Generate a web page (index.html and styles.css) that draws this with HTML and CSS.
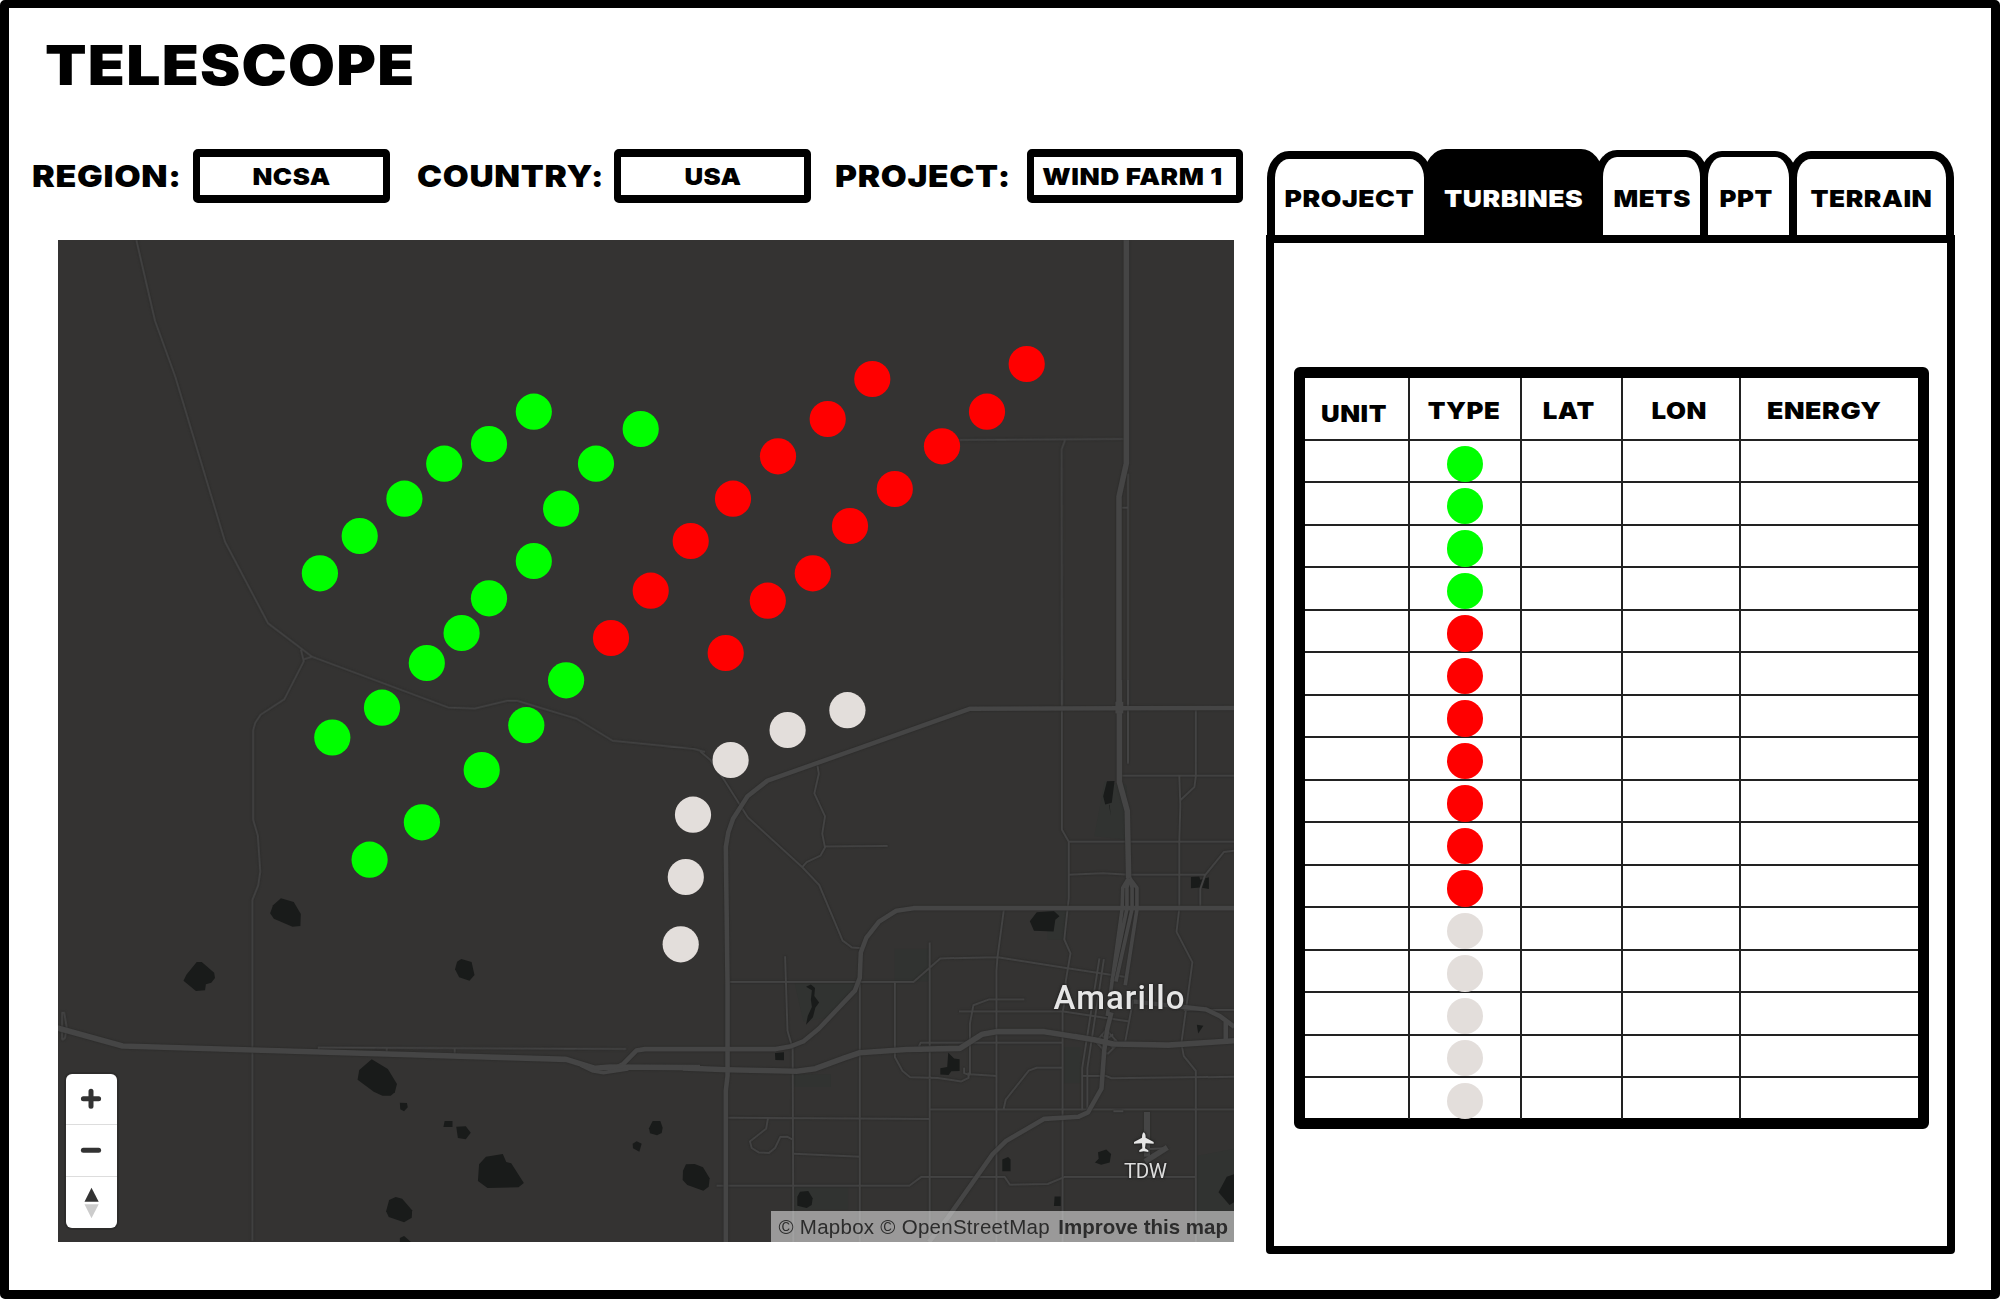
FILE: index.html
```html
<!DOCTYPE html>
<html lang="en">
<head>
<meta charset="utf-8">
<title>Telescope</title>
<link rel="stylesheet" href="styles.css">
</head>
<body>
<div class="frame">
  <header class="header"><h1 class="title">TELESCOPE</h1></header>
  <main class="main">
    <section class="left">
      <div class="filters">
        <span class="label label-region">REGION:</span><div class="field"><span class="wide">NCSA</span></div>
        <span class="label label-country">COUNTRY:</span><div class="field field-usa"><span class="wide">USA</span></div>
        <span class="label label-project">PROJECT:</span><div class="field field-farm"><span class="wide">WIND FARM 1</span></div>
      </div>
      <div class="map">
        <svg class="map-canvas" viewBox="58 240 1176 1001.5" preserveAspectRatio="none">
          <g class="parks">
            <path transform="translate(700 680) scale(.3443 .3633)" d="M1175 280L1240 290L1240 440L1145 430ZM565 740H665V830H620L565 828ZM275 835H455L370 930L300 940ZM1010 635H1065V715H1010ZM1442 1310L1552 1290V1547H1442ZM275 1395H430V1458H275ZM1058 1010H1105V1110H1058ZM270 1085H380V1120H270Z"/>
          </g>
          <g class="lakes">
            <g transform="translate(50 640) scale(.41454 .33333)">
              <path d="M557 775L588 786L605 822L604 858L585 860L540 836L531 820L538 796Z"/>
              <path d="M354 966H366L396 998L398 1014L389 1028L376 1033L374 1051L352 1053L322 1022L329 1004Z"/>
              <path d="M992 957L1017 966L1024 1005L1012 1022L987 1012L977 988L982 965Z"/>
              <path d="M776 1258L815 1287L837 1332L832 1357L822 1367H802L781 1355L742 1319L746 1290Z"/>
              <path d="M844 1388L861 1389L863 1402L854 1414L845 1408Z"/>
              <path d="M952 1443H971V1461H949Z"/>
              <path d="M980 1460L1003 1459L1015 1478L1003 1498L984 1494Z"/>
            </g>
            <g transform="translate(0 1000) scale(.38265 .33333)">
              <path d="M1270 470L1314 462L1323 486L1336 490L1369 549L1355 562L1274 564L1249 543L1252 493Z"/>
              <path d="M1017 600L1034 591L1051 596L1077 631L1076 653L1056 667L1016 651L1009 634Z"/>
              <path d="M1045 714L1056 708L1075 727H1045Z"/>
            </g>
            <g transform="translate(560 1000) scale(.33333)">
              <path d="M278 363H301L308 383L305 399L291 406L270 400L267 385Z"/>
              <path d="M218 431L230 424L245 431L238 455L219 445Z"/>
              <path d="M378 493L404 492L429 502L449 535L446 560L430 572L382 555L368 540L369 512Z"/>
              <path d="M645 159L672 157V181L646 180Z"/>
              <path d="M720 575L745 573L758 595L755 615L740 624L712 617V590Z"/>
            </g>
            <g transform="translate(700 680) scale(.3443 .3633)">
              <path d="M308 844L322 838L334 848L332 870L346 888L335 902L328 928L308 949L313 925L325 900L322 880L325 854Z"/>
              <path d="M1182 279L1204 278L1196 338L1177 343L1171 320ZM1188 343L1193 375L1190 345Z"/>
              <path d="M1426 542L1450 541L1453 550L1478 543V575L1454 571L1426 573Z"/>
              <path d="M978 639L1028 636L1044 650L1032 660L1027 692L970 690L958 664Z"/>
              <path d="M1443 949L1462 952L1447 973Z"/>
              <path d="M721 1026L738 1042L754 1044V1076L730 1077L722 1087L698 1086V1069L718 1065Z"/>
              <path d="M878 1320L895 1313L902 1320V1352H878Z"/>
              <path d="M1156 1300L1180 1292L1194 1305L1190 1328L1165 1334L1147 1328L1158 1318Z"/>
              <path d="M1030 1422H1048V1448H1028Z"/>
              <path d="M1552 1360L1530 1367L1506 1410L1538 1445L1552 1437Z"/>
            </g>
          </g>
          <g class="roads minor">
            <g transform="translate(50 240) scale(.41454 .33333)">
              <path d="M208 0L253 242L302 410L422 905L526 1150L632 1250L960 1402L1025 1405L1103 1382L1127 1382L1270 1436L1357 1502L1552 1526L1580 1536"/>
              <path d="M605 1228L612 1264L565 1378L508 1424L495 1448L490 1470V1740L501 1786L507 1895L502 1936L488 1980V3003"/>
              <path d="M632 1250L612 1258"/>
              <path d="M648 2430V2422L1390 2427M812 2427V2436M976 2427V2440M29 2400V2318L34 2318L40 2362L36 2394L29 2400"/>
            </g>
            <g transform="translate(700 330) scale(.33333)">
              <path d="M778 330L1276 327M1095 331L1085 358L1086 1130M1284 430V1130M1264 533H1284"/>
            </g>
            <g transform="translate(700 680) scale(.3443 .3633)">
              <path d="M0 196L30 220L70 275L139 378L297 515L346 564L414 717L441 736L470 738"/>
              <path d="M341 235L345 258L332 312L363 375L355 423L363 461L350 483L310 501L297 515M363 458L545 457"/>
              <path d="M1051 0V412L1071 445V600L1058 714L1076 752L1062 830V870L1053 915V1547"/>
              <path d="M1243 0V230M1225 263H1552M1440 82V265L1436 294L1396 330M1392 265L1395 345L1392 445V628L1384 693L1430 777L1398 1000L1405 1035L1440 1076V1547M1071 445H1552M1071 536L1170 532L1245 536H1470M1552 470L1522 473L1467 537L1453 575V625"/>
              <path d="M883 628L864 762L861 800V1547M80 831H620L698 766L864 763L1095 797L1235 817M247 760L254 965L269 1015L271 1547M464 830V1547M566 831V1038L588 1076L610 1093L690 1095L758 1105L780 1095V1080M667 722V1547"/>
              <path d="M942 879H840L794 895L784 945V1085L861 1090M784 1088L767 1082V1067M752 912H1055L1246 940M635 1010L641 998H1053M1053 1067H978L955 1075L888 1155L882 1180M667 1182H1552M78 1205L667 1208M197 1208L192 1235L145 1270L150 1288L170 1300L200 1302L218 1288L233 1258L254 1257L269 1265M271 1304L464 1312M48 1392H608L642 1368L885 1368L900 1389L1010 1387L1058 1368H1440"/>
              <path d="M1160 766L1110 1068V1185M1173 768L1125 1068V1180M1108 1090H1180L1195 1096L1552 1092M1258 880L1235 995M1405 908H1552M1183 1030L1150 995L1180 963L1215 1000L1183 1030M1155 1005L1200 975M1165 1015L1210 990M1165 975L1200 1012"/>
            </g>
          </g>
          <g class="roads major">
            <g transform="translate(700 330) scale(.33333)">
              <path class="w5" d="M1279 -270V400L1257 500V1130"/>
            </g>
            <g transform="translate(700 680) scale(.3443 .3633)">
              <path class="w5" d="M1218 0V280L1241 360L1245 545"/>
              <path class="w8" d="M1218 60V92"/>
              <path class="w4" d="M75 1547V1130L80 1090V840L75 460L82 420L96 382L138 320L196 277L785 79L1552 77"/>
              <path class="w4" d="M1552 628H620L570 635L520 665L483 710L467 750L464 820L450 855L345 960L300 995L265 1008L220 1016H-160L-185 1020L-222 1056L-245 1068"/>
              <path class="w3" d="M1245 545L1228 572L1226 630L1183 925M1245 545L1240 572V630L1196 830M1248 545L1255 572V630L1208 830M1248 545L1269 572V632L1235 840"/>
              <path class="w4" d="M1195 915L1183 960L1174 1020L1166 1125L1127 1190L1100 1202L1000 1208L890 1268L850 1305L720 1480L665 1547"/>
              <path class="w4" d="M1260 885L1405 900L1470 907L1510 925L1552 955M1527 935V990"/>
            </g>
            <g transform="translate(50 640) scale(.41454 .33333)">
              <path class="w5" d="M18 1164L175 1218L490 1230L1245 1258L1315 1285L1350 1281L1568 1283"/>
              <path class="w3" d="M1280 1275L1310 1293L1335 1298L1395 1287"/>
            </g>
            <g transform="translate(700 680) scale(.3443 .3633)">
              <path class="w5" d="M-50 1068L80 1073L280 1077L335 1070L420 1040L464 1026L600 1017L755 1014L820 975L860 968H1000L1145 990L1200 1002L1360 1005L1552 993"/>
            </g>
            <g transform="translate(1060 1090) scale(.33333)">
              <path class="w6" d="M261 66V200"/><path class="w5" d="M255 215L322 172"/><path class="w2" d="M270 177L310 175M160 64H190"/>
            </g>
          </g>
          <g class="green">
            <circle cx="533.8" cy="411.7" r="18.1"/><circle cx="489" cy="444" r="18.1"/><circle cx="444.2" cy="463.7" r="18.1"/><circle cx="404.4" cy="498.7" r="18.1"/><circle cx="359.7" cy="536" r="18.1"/><circle cx="319.9" cy="573.3" r="18.1"/>
            <circle cx="640.7" cy="429" r="18.1"/><circle cx="596" cy="463.7" r="18.1"/><circle cx="561.1" cy="508.7" r="18.1"/><circle cx="533.8" cy="561" r="18.1"/><circle cx="489" cy="598.3" r="18.1"/><circle cx="461.6" cy="633" r="18.1"/><circle cx="426.8" cy="663" r="18.1"/><circle cx="382" cy="707.7" r="18.1"/><circle cx="332.3" cy="737.5" r="18.1"/>
            <circle cx="566.1" cy="680.3" r="18.1"/><circle cx="526.3" cy="725.2" r="18.1"/><circle cx="481.7" cy="770" r="18.1"/><circle cx="421.9" cy="822.3" r="18.1"/><circle cx="369.6" cy="859.7" r="18.1"/>
          </g>
          <g class="red">
            <circle cx="872.3" cy="379" r="18.1"/><circle cx="827.7" cy="419" r="18.1"/><circle cx="778" cy="456.3" r="18.1"/><circle cx="733" cy="498.7" r="18.1"/><circle cx="690.7" cy="541" r="18.1"/><circle cx="650.7" cy="590.7" r="18.1"/><circle cx="611" cy="638" r="18.1"/>
            <circle cx="1026.7" cy="364" r="18.1"/><circle cx="987" cy="411.7" r="18.1"/><circle cx="942" cy="446.3" r="18.1"/><circle cx="894.8" cy="489" r="18.1"/><circle cx="850" cy="526" r="18.1"/><circle cx="812.8" cy="573.3" r="18.1"/><circle cx="767.8" cy="600.7" r="18.1"/><circle cx="725.7" cy="653" r="18.1"/>
          </g>
          <g class="gray">
            <circle cx="847.4" cy="710.2" r="18.1"/><circle cx="787.6" cy="730" r="18.1"/><circle cx="730.6" cy="760" r="18.1"/><circle cx="693" cy="814.7" r="18.1"/><circle cx="685.8" cy="877" r="18.1"/><circle cx="680.7" cy="944.3" r="18.1"/>
          </g>
          <g class="places">
            <text class="city" x="1053.5" y="1009" textLength="131">Amarillo</text>
            <path transform="translate(1060 1090) scale(.33333)" d="M251 127C255 129 257 134 257 143L281 156V161L257 160L255 175L265 181V186L251 184L238 186V181L247 175L246 160L222 161V156L246 143C246 134 248 129 251 127Z"/>
            <text class="airport" x="1124" y="1178" textLength="43">TDW</text>
          </g>
        </svg>
        <div class="controls">
          <svg class="btn" viewBox="0 0 51 50"><path class="ink" d="M17.4 24.5H32.6M25 17V32"/></svg>
          <svg class="btn" viewBox="0 0 51 50"><path class="ink" d="M17.4 25H32.6"/></svg>
          <svg class="btn" viewBox="0 0 51 50"><path fill="#333" d="M25.5 10L32.7 24H18.5Z"/><path fill="#ccc" d="M18.5 26.5H32.7L25.5 40.5Z"/></svg>
        </div>
        <div class="attribution"><span class="credits">© Mapbox © OpenStreetMap</span><b class="improve">Improve this map</b></div>
      </div>
    </section>
    <section class="right">
      <nav class="tabs">
        <div class="tab t-project"><span class="wide">PROJECT</span></div>
        <div class="tab t-turbines"><span class="wide">TURBINES</span></div>
        <div class="tab t-mets"><span class="wide">METS</span></div>
        <div class="tab t-ppt"><span class="wide">PPT</span></div>
        <div class="tab t-terrain"><span class="wide">TERRAIN</span></div>
      </nav>
      <div class="panel">
        <div class="table">
          <div class="row head"><div class="h-unit"><span class="wide">UNIT</span></div><div class="h-type"><span class="wide">TYPE</span></div><div class="h-lat"><span class="wide">LAT</span></div><div class="h-lon"><span class="wide">LON</span></div><div class="h-energy"><span class="wide">ENERGY</span></div></div>
          <div class="row"><div></div><div><i class="dot on"></i></div><div></div><div></div><div></div></div>
          <div class="row"><div></div><div><i class="dot on"></i></div><div></div><div></div><div></div></div>
          <div class="row"><div></div><div><i class="dot on"></i></div><div></div><div></div><div></div></div>
          <div class="row"><div></div><div><i class="dot on"></i></div><div></div><div></div><div></div></div>
          <div class="row"><div></div><div><i class="dot off"></i></div><div></div><div></div><div></div></div>
          <div class="row"><div></div><div><i class="dot off"></i></div><div></div><div></div><div></div></div>
          <div class="row"><div></div><div><i class="dot off"></i></div><div></div><div></div><div></div></div>
          <div class="row"><div></div><div><i class="dot off"></i></div><div></div><div></div><div></div></div>
          <div class="row"><div></div><div><i class="dot off"></i></div><div></div><div></div><div></div></div>
          <div class="row"><div></div><div><i class="dot off"></i></div><div></div><div></div><div></div></div>
          <div class="row"><div></div><div><i class="dot off"></i></div><div></div><div></div><div></div></div>
          <div class="row"><div></div><div><i class="dot idle"></i></div><div></div><div></div><div></div></div>
          <div class="row"><div></div><div><i class="dot idle"></i></div><div></div><div></div><div></div></div>
          <div class="row"><div></div><div><i class="dot idle"></i></div><div></div><div></div><div></div></div>
          <div class="row"><div></div><div><i class="dot idle"></i></div><div></div><div></div><div></div></div>
          <div class="row last"><div></div><div><i class="dot idle"></i></div><div></div><div></div><div></div></div>
        </div>
      </div>
    </section>
  </main>
</div>
</body>
</html>
```
FILE: styles.css
```css
* { box-sizing: border-box; }
body { margin: 0; background: #fff; color: #000; font-family: Inter, "Liberation Sans", sans-serif; font-weight: 900; }
span { white-space: nowrap; }

/* Extended display lettering */
.title, .label, .wide { letter-spacing: .02em; }
.wide { display: inline-block; transform: scaleX(1.1); }
.title, .label { transform: scaleX(1.1); transform-origin: 0 50%; }

.frame { width: 2000px; height: 1299px; border: solid #000; border-width: 8px 9px 9px; border-radius: 5px; }
.header { height: 141px; padding: 27px 0 0 36px; }
.title { width: fit-content; margin: 0; font-size: 54.5px; line-height: 60px; font-weight: 900; transform: scaleX(1.112); }
.main { display: flex; }
.left { width: 1257px; padding-left: 23px; }
.right { width: 689px; }

.filters { display: grid; grid-template-columns: 161px 197px 27px 197px 197px 24px 192px 216px; height: 54px; }
.label { width: fit-content; font-size: 30.5px; line-height: 54px; }
.label-region { transform: scaleX(1.12); }
.label-country { grid-column: 4; }
.label-project { grid-column: 7; }
.field { display: flex; align-items: center; justify-content: center; border: solid #000; border-width: 8px 7px; border-radius: 5px; font-size: 23.5px; }
.field-usa { padding-left: 2px; }
.field-farm { padding-right: 5px; }
.field-farm .wide { transform: scaleX(1.12); }

.map { position: relative; width: 1176px; height: 1001.5px; margin: 37px 0 0 26px; background: #343332; }
.map-canvas { display: block; width: 100%; height: 100%; }
.parks { fill: #313331; }
.lakes { fill: #191b1a; }
.roads { fill: none; stroke: #454545; stroke-linejoin: round; filter: drop-shadow(0 0 1px #262625); }
.roads path { vector-effect: non-scaling-stroke; }
.minor { stroke: #434343; stroke-width: 2; }
.w2 { stroke-width: 2; }
.w3 { stroke-width: 3.7; }
.w4 { stroke-width: 4.6; }
.w5 { stroke-width: 5.6; }
.w6 { stroke-width: 6; }
.w8 { stroke-width: 8; }
.green { fill: #0f0; }
.red { fill: #f00; }
.gray { fill: #e3dedb; }
.places { fill: #e6e6e6; filter: drop-shadow(0 0 1px #222) drop-shadow(0 0 1px #222); }
.city { font: 500 33px Roboto, sans-serif; }
.airport { font: 400 20.5px Roboto, sans-serif; fill: #ddd; }

.controls { position: absolute; left: 8px; top: 834px; width: 51px; height: 154px; display: flex; flex-direction: column; background: #fff; border-radius: 6px; box-shadow: 0 0 0 2px rgba(0,0,0,.12); }
.btn { display: block; width: 51px; height: 51.3px; border-bottom: 1px solid #ddd; }
.btn:last-child { border: 0; }
.ink { fill: none; stroke: #333; stroke-width: 5; stroke-linecap: round; }
.attribution { position: absolute; right: 0; bottom: 0; width: 463.5px; height: 31px; padding: 0 6px 0 8px; display: flex; justify-content: space-between; background: rgba(255,255,255,.5); color: #2c2c2c; font: 20.5px/32px "Liberation Sans", sans-serif; }
.credits { letter-spacing: .27px; }

.tabs { display: flex; align-items: flex-end; height: 86px; padding-left: 1px; }
.tab { height: 84px; margin-right: -8px; border: 8px solid #000; border-bottom: 0; border-radius: 22px 22px 0 0 / 27px 27px 0 0; font-size: 23.5px; padding-top: 26px; line-height: 28px; display: flex; justify-content: center; align-items: flex-start; }
.t-project { width: 165px; }
.t-project .wide, .t-turbines .wide { transform: scaleX(1.13); }
.t-turbines { width: 179px; height: 86px; padding-top: 28px; background: #000; color: #fff; }
.t-mets { width: 113px; height: 85px; border-top-width: 7px; padding: 28px 0 0 2px; }
.t-ppt { width: 97px; border-top-width: 6px; padding: 28px 5px 0 0; }
.t-terrain { width: 165px; margin-right: 0; }
.t-terrain .wide { transform: scaleX(1.12); }
.panel { width: 689px; height: 1019px; border: 8px solid #000; border-radius: 0 0 4px 4px; padding: 124px 0 0 20px; }
.table { width: 635px; height: 762px; border: solid #000; border-width: 11px; border-radius: 6px; }
.row { display: grid; grid-template-columns: 105px 112px 101px 118px 1fr; height: 42.47px; border-bottom: 2px solid #222; }
.row > div { border-right: 2px solid #222; display: flex; justify-content: center; align-items: flex-start; }
.row > div:last-child { border-right: 0; }
.head { height: 63px; font-size: 23.5px; line-height: 28px; }
.head > div { padding-top: 19px; }
.head > .h-unit { padding: 22px 5px 0 0; }
.head > .h-type { padding-right: 2px; }
.head > .h-lat { padding-right: 5px; }
.head > .h-lon { padding-right: 3px; }
.head > .h-energy { padding-right: 11px; }
.h-energy .wide { transform: scaleX(1.14); }
.last { height: 40px; border-bottom: 0; }
.dot { flex: none; width: 36.4px; height: 36.4px; margin-top: 4.5px; border-radius: 50%; }
.on { background: #0f0; }
.off { background: #f00; }
.idle { background: #e3dedb; }
```
